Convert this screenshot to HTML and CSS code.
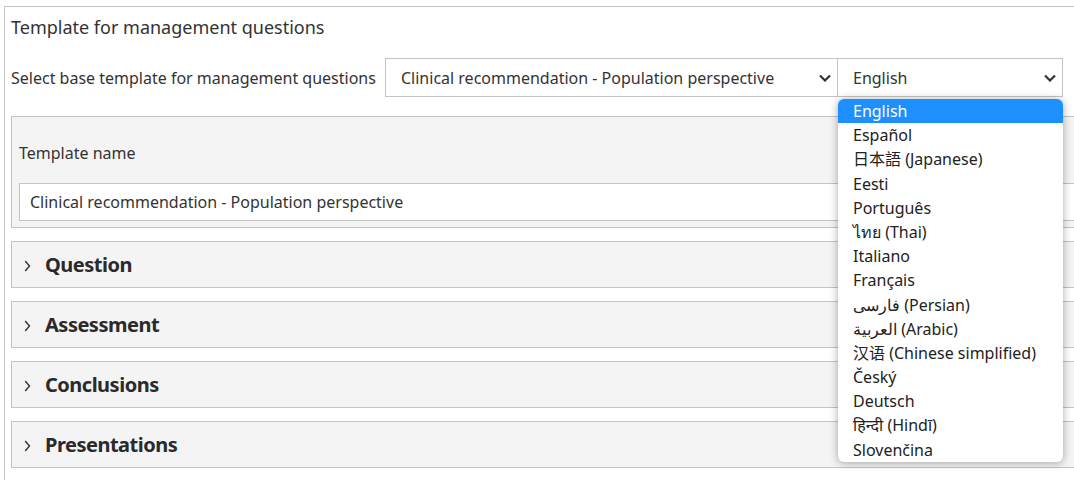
FILE: index.html
```html
<!DOCTYPE html>
<html>
<head>
<meta charset="utf-8">
<link rel="stylesheet" href="styles.css">
</head>
<body>
<div class="page">
  <h2 class="title">Template for management questions</h2>
  <div class="base-row">
    <span class="label">Select base template for management questions</span>
    <div class="select sel-template">
      <span>Clinical recommendation - Population perspective</span>
      <svg class="chev" width="12" height="8" viewBox="0 0 12 8"><path d="M1 1.5 L6 6.5 L11 1.5" fill="none" stroke="#333" stroke-width="2.2"/></svg>
    </div>
    <div class="select sel-lang">
      <span>English</span>
      <svg class="chev" width="12" height="8" viewBox="0 0 12 8"><path d="M1 1.5 L6 6.5 L11 1.5" fill="none" stroke="#333" stroke-width="2.2"/></svg>
      <ul class="dropdown">
        <li class="active">English</li>
        <li>Español</li>
        <li>日本語 (Japanese)</li>
        <li>Eesti</li>
        <li>Português</li>
        <li>ไทย (Thai)</li>
        <li>Italiano</li>
        <li>Français</li>
        <li>فارسی (Persian)</li>
        <li>العربية (Arabic)</li>
        <li>汉语 (Chinese simplified)</li>
        <li>Český</li>
        <li>Deutsch</li>
        <li>हिन्दी (Hindī)</li>
        <li>Slovenčina</li>
      </ul>
    </div>
  </div>
  <div class="panel name-panel">
    <div class="field-label">Template name</div>
    <div class="input">Clinical recommendation - Population perspective</div>
  </div>
  <div class="panel section"><svg class="arrow" width="7" height="12" viewBox="0 0 7 12"><path d="M1.2 1 L5.5 6 L1.2 11" fill="none" stroke="#333" stroke-width="1.4"/></svg><span>Question</span></div>
  <div class="panel section"><svg class="arrow" width="7" height="12" viewBox="0 0 7 12"><path d="M1.2 1 L5.5 6 L1.2 11" fill="none" stroke="#333" stroke-width="1.4"/></svg><span>Assessment</span></div>
  <div class="panel section"><svg class="arrow" width="7" height="12" viewBox="0 0 7 12"><path d="M1.2 1 L5.5 6 L1.2 11" fill="none" stroke="#333" stroke-width="1.4"/></svg><span>Conclusions</span></div>
  <div class="panel section"><svg class="arrow" width="7" height="12" viewBox="0 0 7 12"><path d="M1.2 1 L5.5 6 L1.2 11" fill="none" stroke="#333" stroke-width="1.4"/></svg><span>Presentations</span></div>
</div>
</body>
</html>
```

FILE: styles.css
```css
html, body {
  margin: 0;
  padding: 0;
  overflow: hidden;
  background: #fff;
}
body {
  padding: 6px 0 0 4px;
  font-family: "Noto Sans", "Noto Sans CJK SC", sans-serif;
  color: #333;
}
.page {
  width: 1200px;
  border-left: 1px solid #c4c4c4;
  border-top: 1px solid #c4c4c4;
  padding: 8px 0 0 6px;
  height: 520px;
  box-sizing: border-box;
}
.title {
  margin: 0;
  font-size: 18px;
  font-weight: normal;
  line-height: 24px;
}
.base-row {
  display: flex;
  align-items: center;
  margin-top: 19px;
  height: 39px;
}
.label {
  font-size: 16px;
  width: 374px;
  flex: none;
  white-space: nowrap;
}
.select {
  position: relative;
  box-sizing: border-box;
  height: 39px;
  border: 1px solid #c4c4c4;
  display: flex;
  align-items: center;
  justify-content: space-between;
  padding: 0 6px 0 15px;
  font-size: 16px;
  background: #fff;
  flex: none;
}
.sel-template {
  width: 453px;
}
.sel-lang {
  width: 226px;
  margin-left: -1px;
}
.chev {
  display: block;
  margin-top: 1px;
}
.dropdown {
  position: absolute;
  top: 40px;
  left: 0;
  width: 225px;
  margin: 0;
  padding: 0;
  list-style: none;
  background: #fff;
  border-radius: 6px;
  overflow: hidden;
  box-shadow: 0 1px 8px rgba(0, 0, 0, 0.35);
  z-index: 5;
}
.dropdown li {
  height: 24.2px;
  line-height: 24px;
  padding-left: 15px;
  font-size: 16px;
  color: #222;
  white-space: nowrap;
}
.dropdown li.active {
  background: #1e8fff;
  color: #fff;
}
.panel {
  background: #f4f4f4;
  border: 1px solid #c4c4c4;
  box-sizing: border-box;
}
.name-panel {
  margin-top: 19px;
  padding: 26px 0 6px 7px;
}
.field-label {
  font-size: 16px;
  line-height: 20px;
}
.input {
  margin-top: 20px;
  height: 38px;
  box-sizing: border-box;
  border: 1px solid #c4c4c4;
  background: #fff;
  display: flex;
  align-items: center;
  padding-left: 10px;
  font-size: 16px;
}
.section {
  margin-top: 13px;
  height: 47px;
  display: flex;
  align-items: center;
  padding-left: 12px;
}
.section .arrow {
  display: block;
  margin-top: 2px;
  margin-right: 14px;
}
.section span {
  font-size: 20px;
  font-weight: bold;
  color: #2a2a2a;
  letter-spacing: -0.5px;
}
```
